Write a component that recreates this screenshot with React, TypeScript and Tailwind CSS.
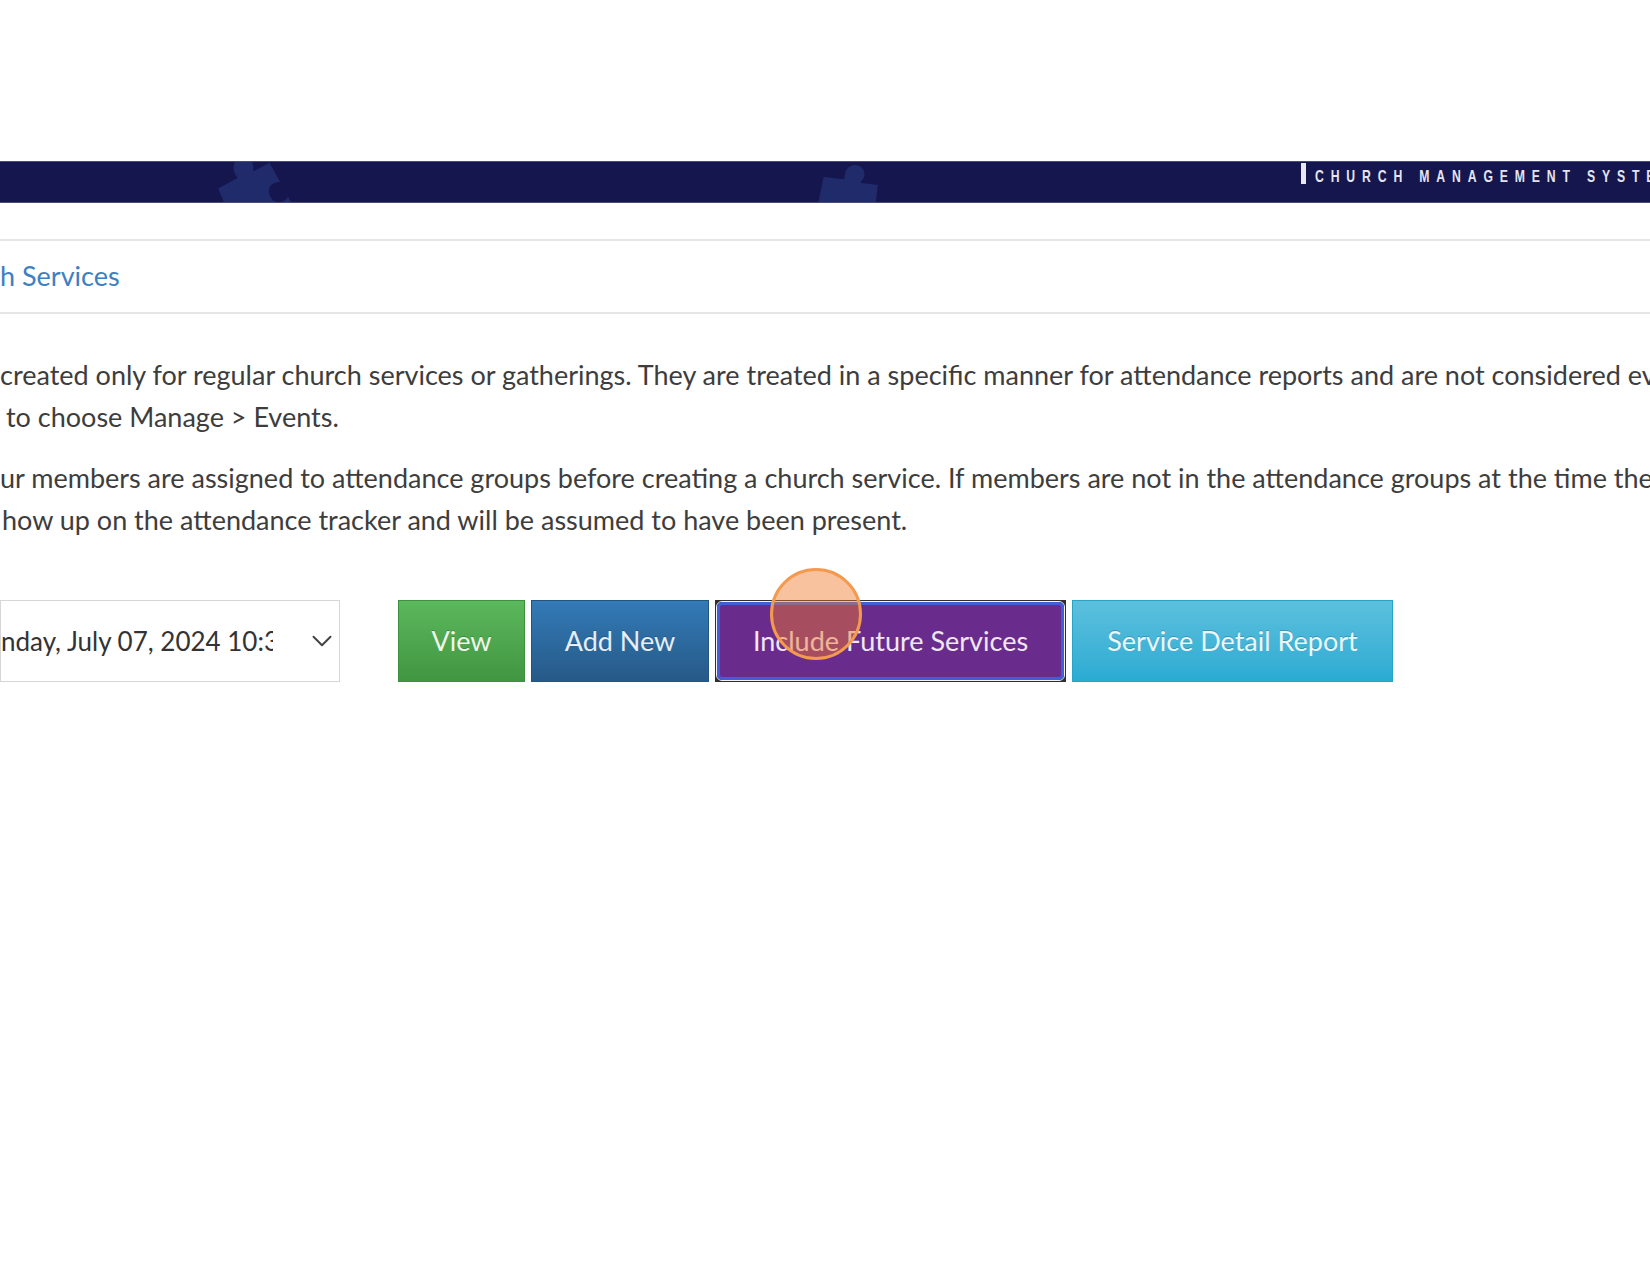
import { ChevronDown } from "lucide-react";

const btnBase =
  "flex h-[82px] shrink-0 items-center justify-center text-[27px] [text-shadow:0_-1px_0_rgba(0,0,0,0.2)]";

function Puzzle({ className }: { className: string }) {
  return (
    <svg viewBox="0 0 100 100" className={className} fill="#1f2b6b">
      <path d="M18 34 L44 30 C40 18 46 8 56 9 C66 10 70 20 64 29 L86 26 L90 52 C80 48 72 54 73 64 C74 74 84 78 93 72 L97 98 L22 104 Z" />
    </svg>
  );
}

function Banner() {
  return (
    <div className="relative flex h-[42px] items-start overflow-hidden border-y border-[#4b4b78] bg-[#16164e]">
      <Puzzle className="absolute left-[196px] top-[-12px] h-[84px] w-[104px] -rotate-[20deg]" />
      <Puzzle className="absolute left-[790px] top-[-6px] h-[80px] w-[110px] rotate-[15deg]" />
      <div className="w-[1301px] shrink-0" />
      <div className="relative mt-[1px] flex items-start gap-[9px]">
        <span className="h-[21px] w-[5px] bg-[#e8e8ee]" />
        <span className="mt-[4px] origin-left scale-x-[0.72] whitespace-nowrap font-['Liberation_Sans',sans-serif] text-[17px] font-bold leading-[20px] tracking-[9.5px] text-[#e4e4ec]">
          CHURCH MANAGEMENT SYSTEM
        </span>
      </div>
    </div>
  );
}

export default function App() {
  return (
    <div className="min-h-[1275px] overflow-hidden bg-white font-[Lato,sans-serif] text-[#3d3d3d]">
      <div className="h-[161px]" />
      <Banner />
      <div className="h-[36px]" />

      <div className="flex h-[75px] items-center border-y-2 border-[#e6e6e6]">
        <span className="text-[27px] text-[#3d80c2]">h Services</span>
      </div>

      <div className="mt-[40px] text-[27px] leading-[42px]">
        <p className="whitespace-nowrap">
          created only for regular church services or gatherings. They are treated in a specific manner for attendance reports and are not considered events.
        </p>
        <p className="whitespace-nowrap pl-[6px]">to choose Manage &gt; Events.</p>
      </div>
      <div className="mt-[19px] text-[27px] leading-[42px]">
        <p className="whitespace-nowrap">
          ur members are assigned to attendance groups before creating a church service. If members are not in the attendance groups at the time they
        </p>
        <p className="whitespace-nowrap pl-[2px]">how up on the attendance tracker and will be assumed to have been present.</p>
      </div>

      <div className="mt-[59px] flex items-center">
        <div className="flex h-[82px] w-[340px] shrink-0 items-center border border-[#d6d6d6] bg-white">
          <span className="w-[272px] overflow-hidden whitespace-nowrap text-[26px] text-[#333]">
            nday, July 07, 2024 10:30 AM
          </span>
          <ChevronDown className="ml-[32px] h-[34px] w-[34px] text-[#444]" strokeWidth={1.4} />
        </div>

        <div className="ml-[58px] flex items-center gap-[6px]">
          <button className={`${btnBase} w-[127px] border border-[#3e8f3e] bg-gradient-to-b from-[#5cb85c] to-[#419641] text-[#eef8ea]`}>
            View
          </button>
          <button className={`${btnBase} w-[178px] border border-[#245580] bg-gradient-to-b from-[#337ab7] to-[#265a88] text-[#e6eef8]`}>
            Add New
          </button>
          <div className="relative h-[82px] w-[351px] shrink-0 bg-[#2f2f2f] p-px">
            <div className="h-full w-full rounded-[6px] border border-[#f4f4f8]">
              <button className="flex h-full w-full items-center justify-center rounded-[5px] border-[3px] border-[#3f5ed8] bg-[#6a2c8c] text-[27px] text-[#f0e6f4]">
                Include Future Services
              </button>
            </div>
            <span className="pointer-events-none absolute left-[55px] top-[-32px] h-[92px] w-[92px] rounded-full border-[3px] border-[#f39a4e] bg-[rgba(240,120,40,0.45)]" />
          </div>
          <button className={`${btnBase} w-[321px] border border-[#28a4c9] bg-gradient-to-b from-[#5bc0de] to-[#2aabd2] text-[#eaf7fc]`}>
            Service Detail Report
          </button>
        </div>
      </div>
    </div>
  );
}
